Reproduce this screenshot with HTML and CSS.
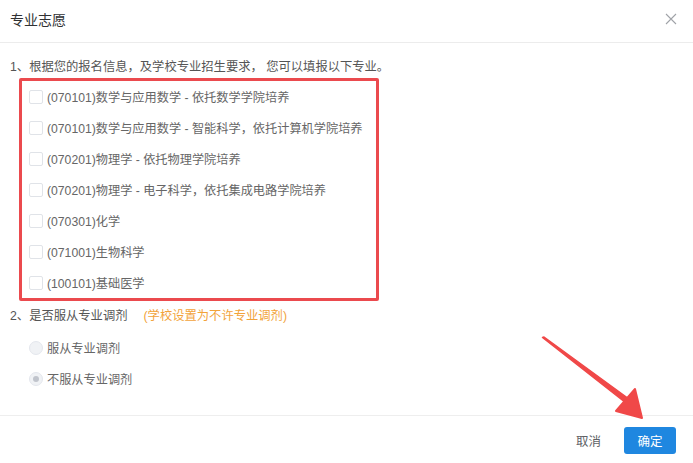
FILE: index.html
```html
<!DOCTYPE html>
<html lang="zh-CN">
<head>
<meta charset="utf-8">
<title>专业志愿</title>
<link rel="stylesheet" href="styles.css">
</head>
<body>
<div class="dialog">
  <div class="dialog-header">
    <span class="dialog-title">专业志愿</span>
    <svg class="close" width="12" height="12" viewBox="0 0 12 12"><path d="M1 1 L11 11 M11 1 L1 11" stroke="#a0a3a8" stroke-width="1.1" fill="none"/></svg>
  </div>
  <div class="dialog-body">
    <div class="q">1、根据您的报名信息，及学校专业招生要求， 您可以填报以下专业。</div>
    <div class="majors">
      <label class="item"><span class="cb"></span><span>(070101)数学与应用数学 - 依托数学学院培养</span></label>
      <label class="item"><span class="cb"></span><span>(070101)数学与应用数学 - 智能科学，依托计算机学院培养</span></label>
      <label class="item"><span class="cb"></span><span>(070201)物理学 - 依托物理学院培养</span></label>
      <label class="item"><span class="cb"></span><span>(070201)物理学 - 电子科学，依托集成电路学院培养</span></label>
      <label class="item"><span class="cb"></span><span>(070301)化学</span></label>
      <label class="item"><span class="cb"></span><span>(071001)生物科学</span></label>
      <label class="item"><span class="cb"></span><span>(100101)基础医学</span></label>
    </div>
    <div class="q q2">2、是否服从专业调剂<span class="note">(学校设置为不许专业调剂)</span></div>
    <div class="radios">
      <label class="item"><span class="rd"></span><span>服从专业调剂</span></label>
      <label class="item"><span class="rd checked"></span><span>不服从专业调剂</span></label>
    </div>
  </div>
  <div class="dialog-footer">
    <button class="btn btn-text">取消</button>
    <button class="btn btn-primary">确定</button>
  </div>
  <svg class="arrow" width="693" height="463" viewBox="0 0 693 463">
    <path d="M542.5 337.5 L544 337 L629 399 L626 403 Z" fill="#f04848" stroke="#f04848" stroke-width="1.5" stroke-linejoin="round"/>
    <path d="M642 418 L616 411 L635 389 Z" fill="#f04848" stroke="#f04848" stroke-width="2" stroke-linejoin="round"/>
  </svg>
</div>
</body>
</html>
```
FILE: styles.css
```css
html, body {
  margin: 0;
  padding: 0;
  background: #fff;
}
body {
  font-family: "Liberation Sans", "Noto Sans CJK SC", sans-serif;
  font-size: 12.2px;
  color: #606266;
}
.dialog {
  position: relative;
  width: 693px;
  height: 463px;
}
.dialog-header {
  border-bottom: 1px solid #ececec;
  display: flex;
  align-items: center;
  justify-content: space-between;
  padding: 0 16px 4px 10px;
  height: 38px;
}
.dialog-title {
  font-size: 14px;
  color: #303133;
}
.close {
  display: block;
}
.dialog-body {
  padding: 14px 0 21px 10px;
}
.q {
  height: 20px;
  line-height: 20px;
  color: #555;
  font-size: 12.3px;
}
.majors {
  margin: 1px 0 0 9px;
  width: 360px;
  box-sizing: border-box;
  border: 3px solid #eb4a4e;
  border-radius: 2px;
  padding-left: 7px;
}
.item {
  display: flex;
  align-items: center;
  height: 31px;
  gap: 4px;
  color: #666;
}
.cb {
  width: 12px;
  height: 12px;
  border: 1px solid #e0e3e8;
  border-radius: 2px;
  background: #fff;
  flex: none;
}
.q2 {
  margin-top: 5px;
}
.note {
  color: #f2a33a;
  margin-left: 16px;
}
.radios {
  margin-top: 6px;
  padding-left: 19px;
}
.rd {
  width: 12px;
  height: 12px;
  border: 1px solid #e4e7ed;
  border-radius: 50%;
  background: #f0f2f5;
  flex: none;
  display: flex;
  align-items: center;
  justify-content: center;
}
.rd.checked::after {
  content: "";
  width: 6px;
  height: 6px;
  border-radius: 50%;
  background: #c0c4cc;
}
.dialog-footer {
  border-top: 1px solid #eeeeee;
  padding: 11px 17px 0 0;
  display: flex;
  justify-content: flex-end;
  align-items: center;
}
.btn {
  font-family: "Liberation Sans", "Noto Sans CJK SC", sans-serif;
  font-size: 12.5px;
  height: 27px;
  border: none;
  border-radius: 3px;
  padding: 0;
  cursor: pointer;
}
.btn-text {
  background: transparent;
  color: #606266;
  width: 49px;
  margin-right: 11px;
}
.btn-primary {
  background: #1f87e0;
  color: #fff;
  width: 52px;
}
.arrow {
  position: absolute;
  left: 0;
  top: 0;
  pointer-events: none;
}
```
